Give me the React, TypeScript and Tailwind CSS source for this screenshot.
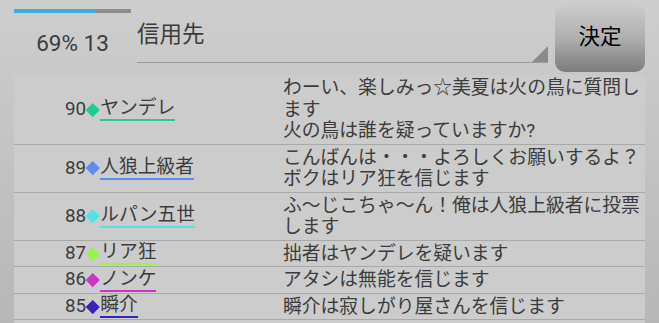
const rows = [
  { no: 90, name: 'ヤンデレ', color: '#1ccf8c', lines: ['わーい、楽しみっ☆美夏は火の鳥に質問し', 'ます', '火の鳥は誰を疑っていますか?'] },
  { no: 89, name: '人狼上級者', color: '#5a8cf2', lines: ['こんばんは・・・よろしくお願いするよ？', 'ボクはリア狂を信じます'] },
  { no: 88, name: 'ルパン五世', color: '#4fe3e3', lines: ['ふ～じこちゃ～ん！俺は人狼上級者に投票', 'します'] },
  { no: 87, name: 'リア狂', color: '#98f34a', lines: ['拙者はヤンデレを疑います'] },
  { no: 86, name: 'ノンケ', color: '#cc33c8', lines: ['アタシは無能を信じます'] },
  { no: 85, name: '瞬介', color: '#3a22b8', lines: ['瞬介は寂しがり屋さんを信じます'] },
]

export default function App() {
  return (
    <div className="w-[659px] h-[323px] overflow-hidden flex flex-col bg-gradient-to-b from-[#cecece] to-[#b7b7b7] font-['Roboto','Noto_Sans_CJK_JP',sans-serif] text-[#3c3c3c]">
      {/* header */}
      <div className="h-[75px] flex shrink-0">
        <div className="w-[137px] pl-[14px] pr-[6px] pt-[9px]">
          <div className="w-[117px] h-[4px] bg-[#8e8e8e]">
            <div className="w-[81px] h-full bg-[#3aaed9]" />
          </div>
          <div className="w-[117px] text-center text-[22.5px] leading-none mt-[19px]">69% 13</div>
        </div>
        <div className="w-[411px] h-[63px] relative border-b border-[#9a9a9a]">
          <div className="text-[22.5px] leading-none mt-[23px]">信用先</div>
          <div className="absolute right-0 bottom-0 w-0 h-0 border-l-[16px] border-l-transparent border-b-[16px] border-b-[#8a8a8a]" />
        </div>
        <div className="ml-[7px] mt-[3px] w-[90px] h-[69px] rounded-[10px] bg-gradient-to-b from-[#cdcdcd] via-[#b0b0b0] to-[#7c7c7c] flex items-center justify-center text-[21.5px] text-black">
          決定
        </div>
      </div>

      {/* list */}
      <div className="mx-[14px] flex-1 bg-[#cccccc]">
        {rows.map((r) => (
          <div key={r.no} className="grid grid-cols-[269px_1fr] border-b border-[#a9a9a9] text-[18.8px]">
            <div className="flex items-center pl-[51px]">
              <span className="leading-[21px]">{r.no}</span>
              <span className="w-[14px] flex justify-center">
                <span className="block w-[9.5px] h-[9.5px] rotate-45" style={{ backgroundColor: r.color }} />
              </span>
              <span className="leading-[22px] border-b-2" style={{ borderColor: r.color }}>
                {r.name}
              </span>
            </div>
            <div className="pt-[3px] pb-[1px] leading-[21.5px]">
              {r.lines.map((l, i) => (
                <div key={i} className="whitespace-nowrap">{l}</div>
              ))}
            </div>
          </div>
        ))}
      </div>
    </div>
  )
}
